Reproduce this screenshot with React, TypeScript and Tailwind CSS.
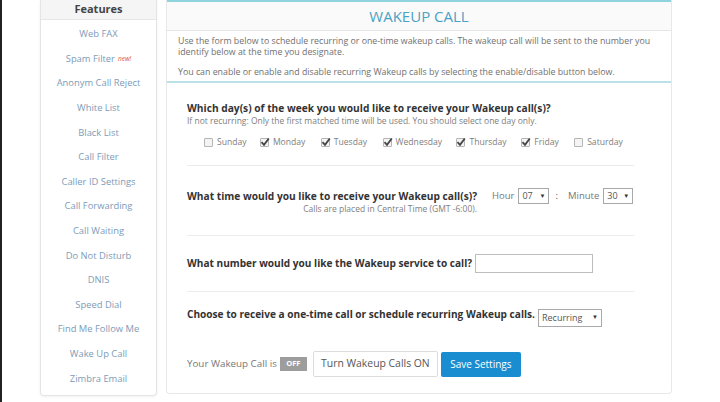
import React from "react";

const features = [
  "Web FAX",
  "Spam Filter",
  "Anonym Call Reject",
  "White List",
  "Black List",
  "Call Filter",
  "Caller ID Settings",
  "Call Forwarding",
  "Call Waiting",
  "Do Not Disturb",
  "DNIS",
  "Speed Dial",
  "Find Me Follow Me",
  "Wake Up Call",
  "Zimbra Email",
];

const days = [
  { name: "Sunday", on: false, w: "w-[56px]" },
  { name: "Monday", on: true, w: "w-[61px]" },
  { name: "Tuesday", on: true, w: "w-[62px]" },
  { name: "Wednesday", on: true, w: "w-[74px]" },
  { name: "Thursday", on: true, w: "w-[65px]" },
  { name: "Friday", on: true, w: "w-[53px]" },
  { name: "Saturday", on: false, w: "w-[60px]" },
];

function Box({ on }: { on: boolean }) {
  return (
    <span className="relative inline-block w-[9px] h-[9px] border border-[#b5b5b5] bg-[#f4f4f4] rounded-[1px] mr-[4px]">
      {on && (
        <svg viewBox="0 0 10 10" className="absolute -left-[1px] -top-[2px] w-[10px] h-[10px]">
          <path d="M1.5 5.2 L4 7.8 L8.8 1.5" fill="none" stroke="#444" strokeWidth="1.8" />
        </svg>
      )}
    </span>
  );
}

function Select({ value, w }: { value: string; w: string }) {
  return (
    <span className={`inline-flex items-center justify-between ${w} h-[16px] border border-[#a9a9a9] bg-white px-[3px] text-[9px] text-[#555]`}>
      {value}
      <span className="text-[6px] text-[#333]">▼</span>
    </span>
  );
}

export default function App() {
  return (
    <div
      className="w-[720px] h-[402px] bg-white overflow-hidden flex border-l-2 border-[#222]"
      style={{ fontFamily: '"Open Sans", "Liberation Sans", sans-serif' }}
    >
      {/* Sidebar */}
      <aside className="ml-[38px] w-[117px] h-[396px] border border-t-0 border-[#e4e4e4] rounded-b-[4px] shadow-[0_1px_3px_rgba(0,0,0,0.06)] flex flex-col">
        <div className="h-[20px] bg-[#f5f5f5] border-b border-[#e6e6e6] flex items-center justify-center text-[11px] font-bold text-[#444]">
          Features
        </div>
        <ul className="pt-[2px] flex flex-col">
          {features.map((f) => (
            <li key={f} className="h-[24.6px] flex items-center justify-center text-[9.4px] text-[#7e9bb8]">
              {f}
              {f === "Spam Filter" && (
                <span className="ml-[3px] text-[6.5px] italic text-[#e0534a]">new!</span>
              )}
            </li>
          ))}
        </ul>
      </aside>

      {/* Main panel */}
      <main className="ml-[9px] w-[506px] h-[394px] border border-t-0 border-[#e8e8e8] rounded-b-[4px] flex flex-col">
        <div className="h-[31px] border-t-[2px] border-[#8fd3df] bg-[#fafafa] border-b border-b-[#e6e6e6] flex items-center justify-center">
          <h1 className="text-[15px] text-[#4aa2c6]">WAKEUP CALL</h1>
        </div>
        <div className="h-[52px] px-[11px] pt-[5px] border-b-[2px] border-[#b9e1e8] text-[8.8px] leading-[11px] text-[#707070]">
          <p>
            Use the form below to schedule recurring or one-time wakeup calls. The wakeup call will be sent to the number you
            identify below at the time you designate.
          </p>
          <p className="mt-[9px]">You can enable or enable and disable recurring Wakeup calls by selecting the enable/disable button below.</p>
        </div>

        <div className="pl-[20px] pr-[37px] flex flex-col">
          {/* Days */}
          <section className="h-[83px] pt-[18px] border-b border-[#ececec]">
            <h2 className="text-[10.2px] leading-[14px] font-bold text-[#333] whitespace-nowrap">
              Which day(s) of the week you would like to receive your Wakeup call(s)?
            </h2>
            <p className="text-[8.5px] leading-[11px] text-[#808080] whitespace-nowrap">
              If not recurring: Only the first matched time will be used. You should select one day only.
            </p>
            <div className="mt-[10px] ml-[17px] flex items-center text-[8.6px] text-[#808080]">
              {days.map((d) => (
                <label key={d.name} className={`flex items-center ${d.w}`}>
                  <Box on={d.on} />
                  {d.name}
                </label>
              ))}
            </div>
          </section>

          {/* Time */}
          <section className="h-[70px] border-b border-[#ececec] flex items-start pt-[23px]">
            <div className="inline-flex flex-col items-end shrink-0">
              <h2 className="text-[10.2px] leading-[14px] font-bold text-[#333] whitespace-nowrap">
                What time would you like to receive your Wakeup call(s)?
              </h2>
              <span className="text-[8.5px] leading-[11px] text-[#808080] whitespace-nowrap">
                Calls are placed in Central Time (GMT -6:00).
              </span>
            </div>
            <div className="ml-[15px] -mt-[1px] flex items-center text-[9.5px] text-[#777] shrink-0">
              <span className="mr-[4px]">Hour</span>
              <Select value="07" w="w-[31px]" />
              <span className="mx-[6px] text-[#555]">:</span>
              <span className="ml-[4px] mr-[4px]">Minute</span>
              <Select value="30" w="w-[30px]" />
            </div>
          </section>

          {/* Number */}
          <section className="h-[56px] border-b border-[#ececec] flex items-center">
            <h2 className="text-[10.1px] font-bold text-[#333] whitespace-nowrap">
              What number would you like the Wakeup service to call?
            </h2>
            <input className="ml-[3px] w-[118px] h-[19px] border border-[#bdbdbd] bg-white outline-none" />
          </section>

          {/* Recurrence */}
          <section className="h-[46px] flex items-center">
            <h2 className="text-[10.1px] font-bold text-[#333] whitespace-nowrap">
              Choose to receive a one-time call or schedule recurring Wakeup calls.
            </h2>
            <span className="ml-[3px]">
              <Select value="Recurring" w="w-[64px] h-[18px]" />
            </span>
          </section>

          {/* Status row */}
          <div className="mt-[13px] flex items-center text-[9.8px] text-[#777]">
            <span>Your Wakeup Call is</span>
            <span className="ml-[3px] w-[27px] h-[14px] bg-[#9d9d9d] text-white text-[7.5px] font-bold flex items-center justify-center">
              OFF
            </span>
            <button className="ml-[6px] w-[125px] h-[26px] border border-[#dcdcdc] rounded-[2px] bg-white text-[10.4px] text-[#555]">
              Turn Wakeup Calls ON
            </button>
            <button className="ml-[3px] w-[80px] h-[25px] rounded-[2px] bg-[#1a8dd0] text-[10px] text-white">Save Settings</button>
          </div>
        </div>
      </main>
    </div>
  );
}
